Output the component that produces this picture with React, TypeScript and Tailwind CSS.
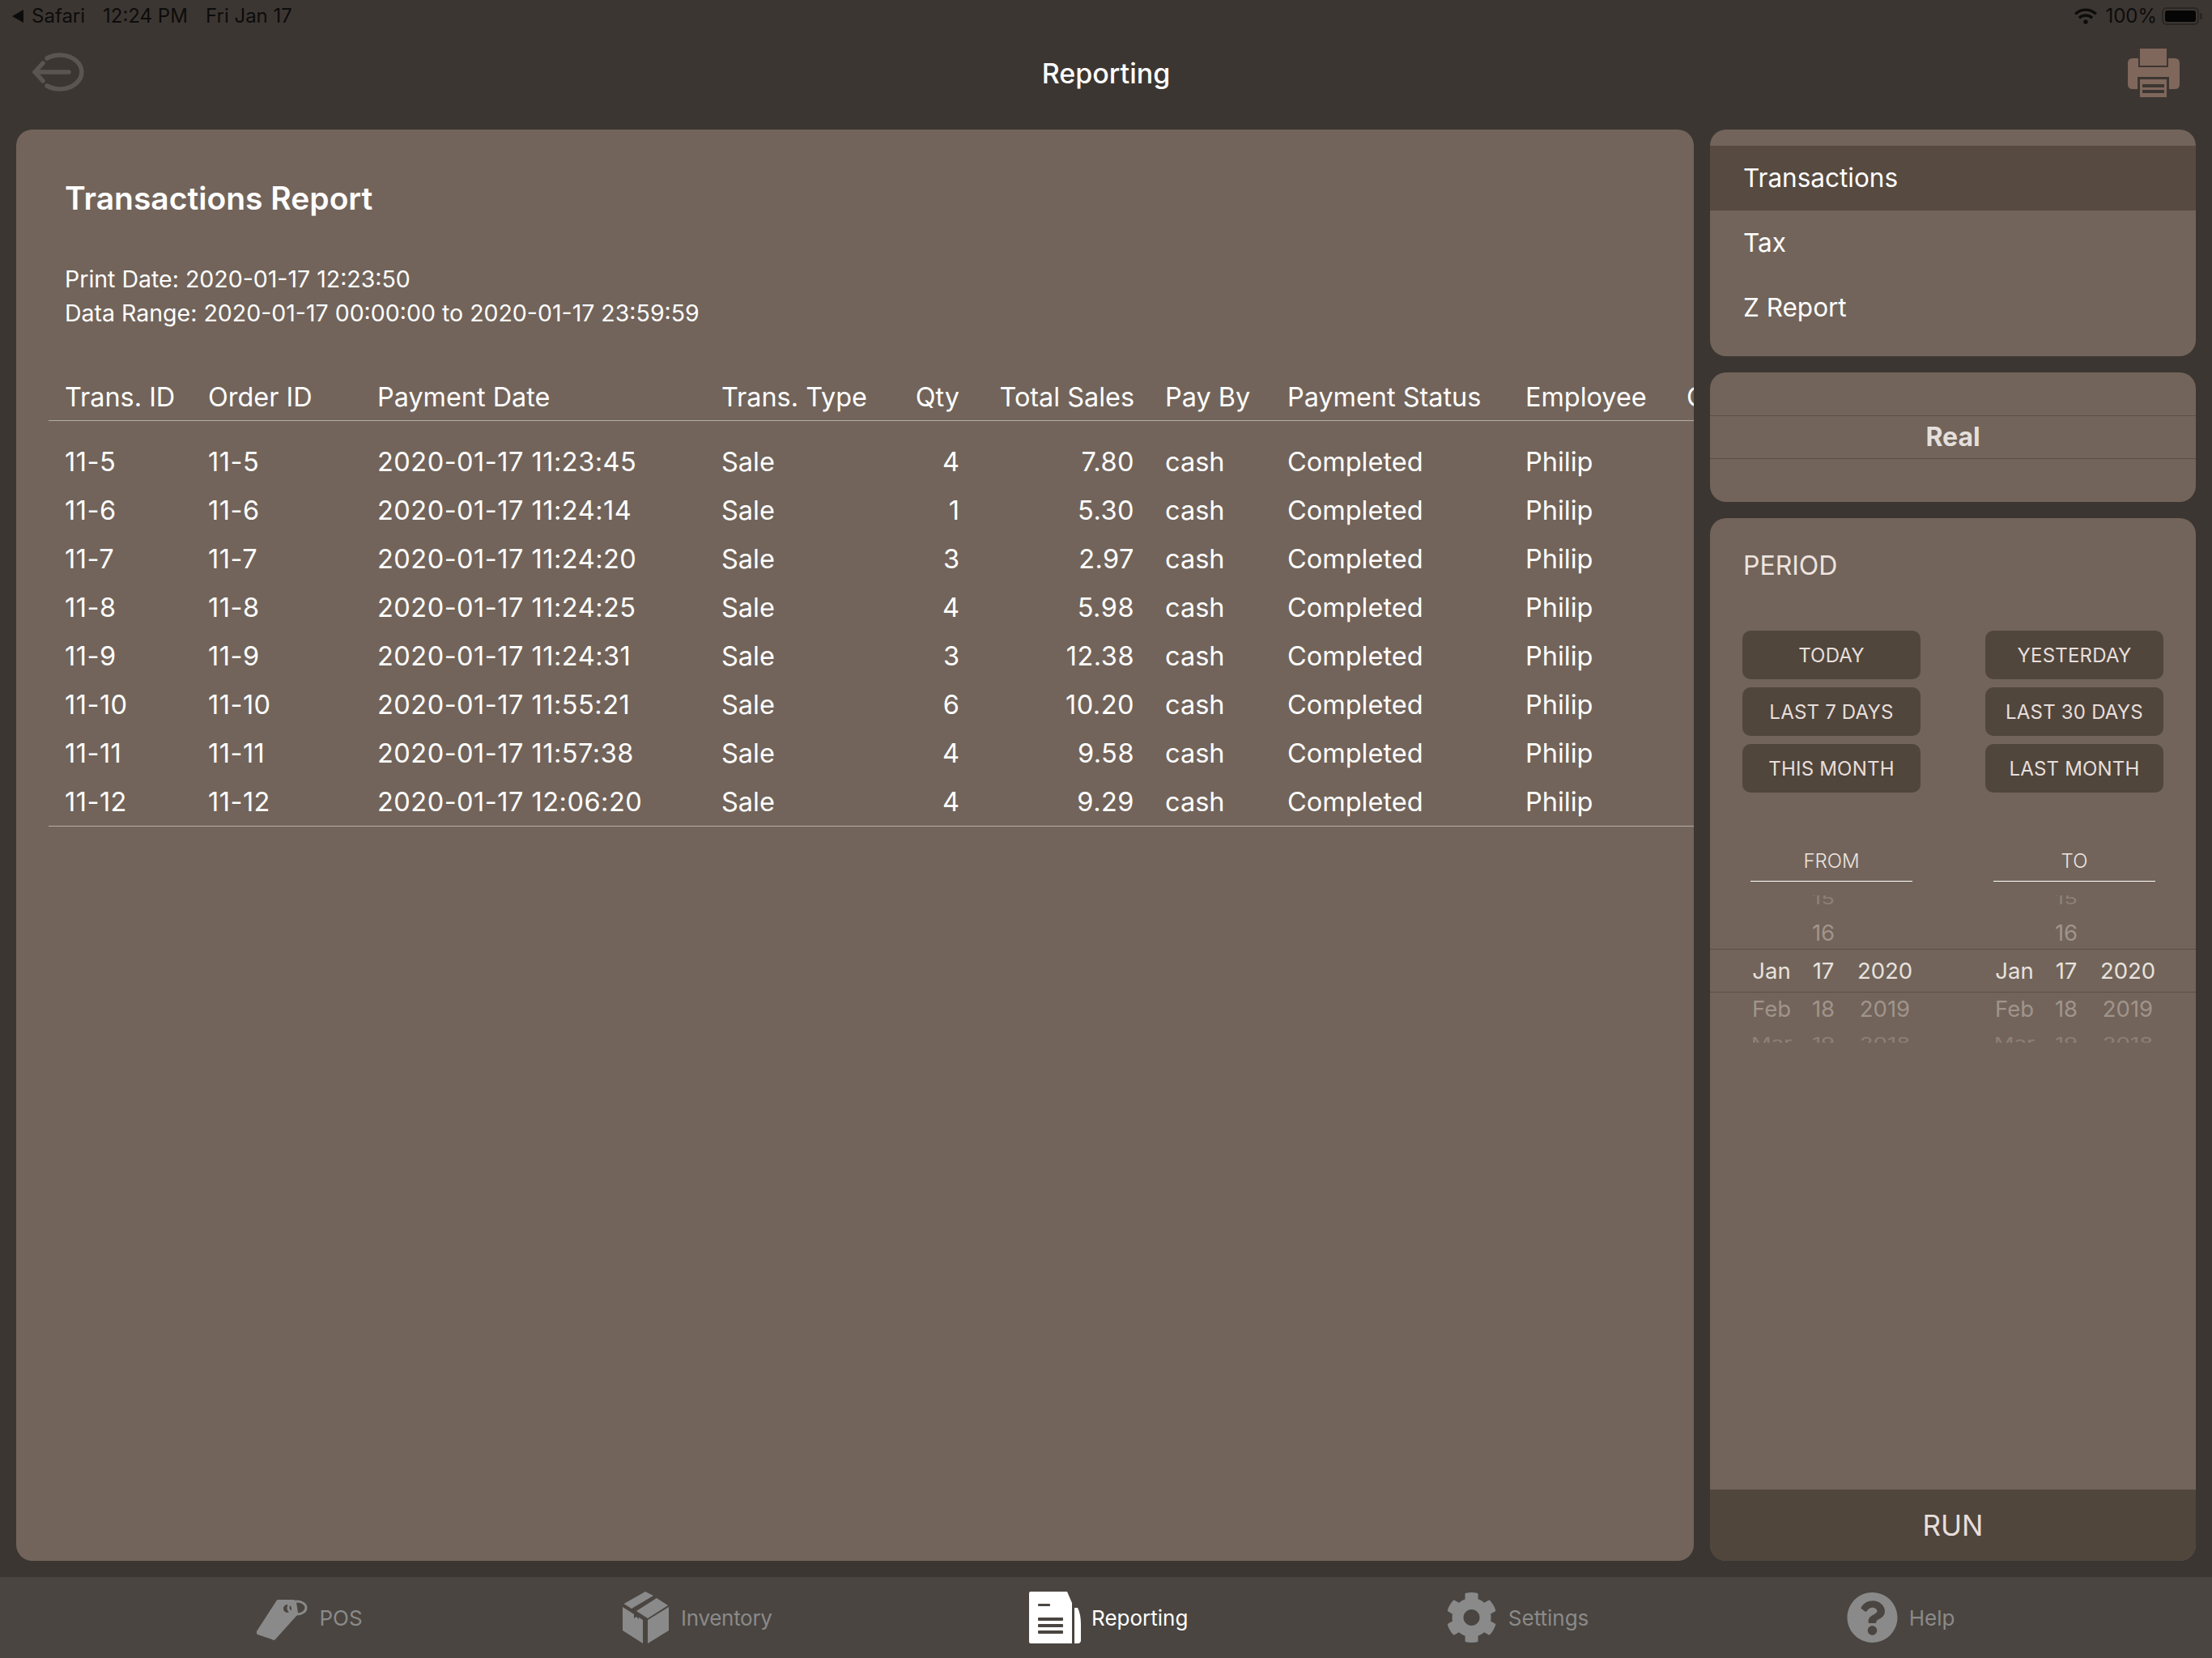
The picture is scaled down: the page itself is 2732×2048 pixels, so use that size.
import React from "react";
import { FaCog, FaQuestionCircle, FaWifi } from "react-icons/fa";

const rows = [
  ["11-5", "2020-01-17 11:23:45", "4", "7.80"],
  ["11-6", "2020-01-17 11:24:14", "1", "5.30"],
  ["11-7", "2020-01-17 11:24:20", "3", "2.97"],
  ["11-8", "2020-01-17 11:24:25", "4", "5.98"],
  ["11-9", "2020-01-17 11:24:31", "3", "12.38"],
  ["11-10", "2020-01-17 11:55:21", "6", "10.20"],
  ["11-11", "2020-01-17 11:57:38", "4", "9.58"],
  ["11-12", "2020-01-17 12:06:20", "4", "9.29"],
];

function TableRowLine({ a, className, num }: { a: string[]; className: string; num?: string }) {
  return (
    <div className={`grid grid-cols-[177px_209px_425px_180px_114px_216px_189px_294px_199px_200px] pl-[20px] w-[2224px] whitespace-nowrap ${className}`}>
      <div className={num}>{a[0]}</div>
      <div className={num}>{a[1]}</div>
      <div className={num}>{a[2]}</div>
      <div>{a[3]}</div>
      <div className="text-right">{a[4]}</div>
      <div className={`text-right ${num}`}>{a[5]}</div>
      <div className="pl-[38px]">{a[6]}</div>
      <div>{a[7]}</div>
      <div>{a[8]}</div>
      <div>{a[9]}</div>
    </div>
  );
}

function PickerCells({ m, d, y }: { m: string; d: string; y: string }) {
  return (
    <div className="grid grid-cols-[80px_48px_104px_68px_80px_48px_104px] pl-[36px] text-center">
      <div>{m}</div>
      <div>{d}</div>
      <div>{y}</div>
      <div />
      <div>{m}</div>
      <div>{d}</div>
      <div>{y}</div>
    </div>
  );
}

function PeriodButton({ label }: { label: string }) {
  return (
    <div className="h-[60px] pt-[2px] rounded-[10px] bg-[#50463c] flex items-center justify-center text-[24px] tracking-[0.2px] text-[#e8dedb]">
      {label}
    </div>
  );
}

function Tab({ icon, label, active, gap }: { icon: React.ReactNode; label: string; active?: boolean; gap: string }) {
  return (
    <div className={`flex items-center text-[26px] ${gap} ${active ? "text-white" : "text-[#8a8a8a]"}`}>
      {icon}
      <span>{label}</span>
    </div>
  );
}

export default function App() {
  return (
    <div className="w-[2732px] h-[2048px] flex flex-col bg-[#3c3632] font-['Inter','Noto_Sans',sans-serif] overflow-hidden text-white">
      {/* status bar */}
      <div className="h-[40px] shrink-0 flex items-center justify-between pl-[14px] pr-[12px] text-[24px] text-[#0c0c0c]">
        <div className="flex items-center">
          <svg width="16" height="18" viewBox="0 0 16 18" className="mr-[9px]">
            <path d="M15 1V17L1 9Z" fill="#0c0c0c" />
          </svg>
          <span className="w-[88px]">Safari</span>
          <span className="w-[127px]">12:24 PM</span>
          <span>Fri Jan 17</span>
        </div>
        <div className="flex items-center">
          <FaWifi className="w-[28px] h-[22px] mr-[10px]" />
          <span className="mr-[6px]">100%</span>
          <div className="w-[46px] h-[22px] rounded-[6px] border-[2px] border-[#2a2623] p-[2px]">
            <div className="w-full h-full rounded-[3px] bg-[#050505]" />
          </div>
          <div className="w-[3px] h-[8px] rounded-r-[2px] bg-[#2a2623] ml-[1px]" />
        </div>
      </div>

      {/* nav bar */}
      <div className="h-[120px] shrink-0 pb-[20px] px-[40px] flex items-center justify-between">
        <svg width="64" height="48" viewBox="0 0 64 48" fill="none" stroke="#5a5551" strokeWidth="5.5" strokeLinecap="round" strokeLinejoin="round" className="mb-[3px]">
          <path d="M18 7A27 21 0 1 1 18 41" />
          <path d="M3 24H45" />
          <path d="M13 13L3 24L13 35" />
        </svg>
        <div className="text-[34px] font-medium">Reporting</div>
        <svg width="64" height="60" viewBox="0 0 64 60" fill="#7f675b">
          <rect x="15" y="0" width="33" height="21" />
          <path d="M6 12H13V23H50V12H58Q64 12 64 18V44Q64 50 58 50H6Q0 50 0 44V18Q0 12 6 12Z" />
          <rect x="12" y="35" width="39" height="25" fill="#3c3632" />
          <rect x="15" y="38" width="33" height="22" />
          <rect x="18" y="44" width="27" height="4" fill="#3c3632" />
          <rect x="18" y="51" width="27" height="4" fill="#3c3632" />
        </svg>
      </div>

      {/* main */}
      <div className="flex-1 min-h-0 flex gap-[20px] px-[20px] pb-[20px]">
        <div className="flex-1 min-w-0 bg-[#72645a] rounded-[20px] overflow-hidden pl-[40px] pt-[55px]">
          <div className="pl-[20px] h-[60px] leading-[60px] text-[39px] font-semibold">Transactions Report</div>
          <div className="pl-[20px] mt-[49px] text-[28.5px] leading-[42px]">
            <div>Print Date: 2020-01-17 12:23:50</div>
            <div>Data Range: 2020-01-17 00:00:00 to 2020-01-17 23:59:59</div>
          </div>
          <TableRowLine
            a={["Trans. ID", "Order ID", "Payment Date", "Trans. Type", "Qty", "Total Sales", "Pay By", "Payment Status", "Employee", "Cashier"]}
            className="mt-[53px] h-[59px] leading-[59px] text-[32.4px] border-b border-[#b4aca6]"
          />
          <div className="pt-[20px] w-[2224px] border-b border-[#b4aca6] text-[32.5px] leading-[62px]">
            {rows.map((r) => (
              <TableRowLine key={r[0]} num="tracking-[0.5px]" a={[r[0], r[0], r[1], "Sale", r[2], r[3], "cash", "Completed", "Philip", ""]} className="h-[60px]" />
            ))}
          </div>
        </div>

        <div className="w-[600px] shrink-0 flex flex-col gap-[20px]">
          <div className="h-[280px] bg-[#72645a] rounded-[20px] pt-[20px] text-[31.5px] overflow-hidden">
            <div className="h-[80px] bg-[#574a40] flex items-center pl-[41px]">Transactions</div>
            <div className="h-[80px] flex items-center pl-[41px]">Tax</div>
            <div className="h-[80px] flex items-center pl-[41px]">Z Report</div>
          </div>

          <div className="h-[160px] bg-[#72645a] rounded-[20px] pt-[53px]">
            <div className="h-[54px] border-y border-[#5a4e45] flex items-center justify-center text-[32px] font-bold text-[#e4dfdc]">Real</div>
          </div>

          <div className="flex-1 min-h-0 bg-[#72645a] rounded-[20px] overflow-hidden flex flex-col">
            <div className="pt-[39px] pl-[41px] h-[79px] leading-[40px] text-[32px] text-[#eee4e0]">PERIOD</div>
            <div className="mt-[60px] px-[40px] grid grid-cols-[220px_220px] gap-x-[80px] gap-y-[10px]">
              {["TODAY", "YESTERDAY", "LAST 7 DAYS", "LAST 30 DAYS", "THIS MONTH", "LAST MONTH"].map((l) => (
                <PeriodButton key={l} label={l} />
              ))}
            </div>
            <div className="mt-[65px] pl-[50px] grid grid-cols-[200px_200px] gap-x-[100px] text-[24px] font-light text-[#eee4e0] text-center">
              <div className="h-[45px] border-b border-white leading-[40px]">FROM</div>
              <div className="h-[45px] border-b border-white leading-[40px]">TO</div>
            </div>
            <div className="mt-[17px] text-[27.5px]">
              <div className="h-[26px] overflow-hidden text-[#8d8077]">
                <div className="-mt-[12px] h-[32px] leading-[32px] scale-y-[.7]">
                  <PickerCells m="" d="15" y="" />
                </div>
              </div>
              <div className="h-[40px] leading-[40px] text-[#a0948c]">
                <PickerCells m="" d="16" y="" />
              </div>
              <div className="h-[54px] leading-[52px] border-y border-[#5a4e45] text-[#e8e2de]">
                <PickerCells m="Jan" d="17" y="2020" />
              </div>
              <div className="h-[40px] leading-[40px] text-[#a0948c]">
                <PickerCells m="Feb" d="18" y="2019" />
              </div>
              <div className="h-[22px] overflow-hidden text-[#8d8077]">
                <div className="h-[44px] leading-[44px] scale-y-[.7]">
                  <PickerCells m="Mar" d="19" y="2018" />
                </div>
              </div>
            </div>
            <div className="flex-1" />
            <div className="h-[88px] shrink-0 bg-[#50463c] flex items-center justify-center text-[35px] text-[#e8dedb]">RUN</div>
          </div>
        </div>
      </div>

      {/* tab bar */}
      <div className="h-[100px] shrink-0 bg-[#4a4540] flex items-center justify-evenly">
        <Tab
          label="POS"
          gap="gap-[13px]"
          icon={
            <svg width="64" height="58" viewBox="0 0 64 58" fill="#8a8a8a">
              <path fillRule="evenodd" d="M26 7H45Q48 7 49 10L51 23Q51 25 50 26L23 56Q21 58 19 56L1 50Q-1 48 0 46L24 9Q25 7 26 7ZM38 13A5 5 0 1 0 38 23A5 5 0 1 0 38 13Z" />
              <ellipse cx="50" cy="17" rx="11" ry="8" fill="none" stroke="#8a8a8a" strokeWidth="3" />
            </svg>
          }
        />
        <Tab
          label="Inventory"
          gap="gap-[15px] ml-[4px] tracking-[-0.3px]"
          icon={
            <svg width="57" height="64" viewBox="0 0 57 64" fill="#8a8a8a">
              <path d="M0 19L25 35V64L0 48Z" />
              <path d="M31 35L57 19V48L31 64Z" />
              <path d="M1.5 15L28 0L38 5L11 21Z" />
              <path d="M42 8L56 17L31 33L17 24Z" />
              <path d="M14 26V33L17 31L20 34V29Z" fill="#4a4540" />
            </svg>
          }
        />
        <Tab
          label="Reporting"
          gap="gap-[13px]"
          active
          icon={
            <svg width="64" height="64" viewBox="0 0 64 64" fill="#ffffff">
              <path d="M2 0H47L53 14V64H2Q0 64 0 62V2Q0 0 2 0Z" />
              <path d="M56 20H60Q64 28 64 40V60Q64 63 61 64H56Z" />
              <rect x="11" y="15" width="15" height="3" rx="1" fill="#4a4540" />
              <rect x="11" y="32" width="31" height="4" rx="1" fill="#4a4540" />
              <rect x="11" y="40" width="31" height="4" rx="1" fill="#4a4540" />
              <rect x="11" y="48" width="31" height="4" rx="1" fill="#4a4540" />
            </svg>
          }
        />
        <Tab label="Settings" gap="gap-[13px]" icon={<FaCog className="w-[65px] h-[64px] text-[#8a8a8a]" />} />
        <Tab label="Help" gap="gap-[13px]" icon={<FaQuestionCircle className="w-[65px] h-[64px] text-[#8a8a8a]" />} />
      </div>
    </div>
  );
}
